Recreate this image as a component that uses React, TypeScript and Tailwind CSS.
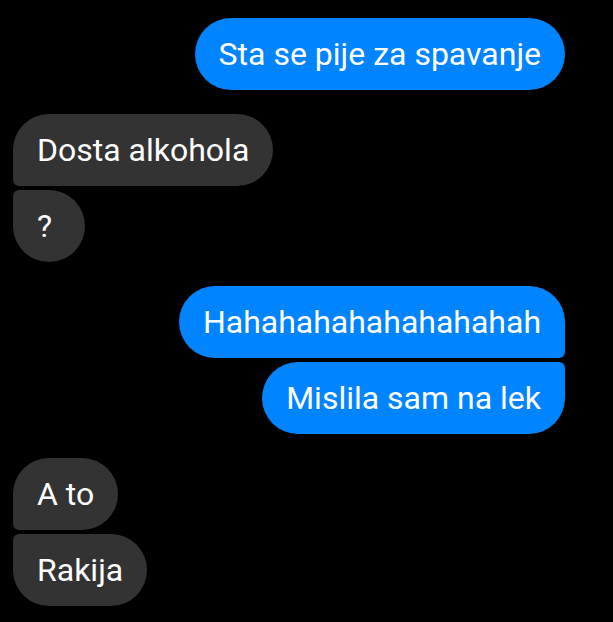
import React from 'react';

type Msg = { text: string; mine: boolean; shape: string };

const groups: Msg[][] = [
  [{ text: 'Sta se pije za spavanje', mine: true, shape: 'rounded-full' }],
  [
    { text: 'Dosta alkohola', mine: false, shape: 'rounded-[36px] rounded-bl-[6px]' },
    { text: '?', mine: false, shape: 'rounded-[36px] rounded-tl-[6px]' },
  ],
  [
    { text: 'Hahahahahahahahahah', mine: true, shape: 'rounded-[36px] rounded-br-[6px]' },
    { text: 'Mislila sam na lek', mine: true, shape: 'rounded-[36px] rounded-tr-[6px]' },
  ],
  [
    { text: 'A to', mine: false, shape: 'rounded-[36px] rounded-bl-[6px]' },
    { text: 'Rakija', mine: false, shape: 'rounded-[36px] rounded-tl-[6px]' },
  ],
];

export default function App() {
  return (
    <div className="min-h-[622px] w-[613px] bg-black pt-[18px] pl-[13px] pr-[48px] font-['Roboto',sans-serif] text-white">
      <div className="flex flex-col gap-6">
        {groups.map((group, gi) => (
          <div key={gi} className="flex flex-col gap-1">
            {group.map((m, i) => (
              <div
                key={i}
                className={`flex h-[72px] min-w-[72px] items-center px-6 text-[32px] leading-none ${m.shape} ${
                  m.mine ? 'self-end bg-[#0084ff]' : 'self-start bg-[#333333]'
                }`}
              >
                {m.text}
              </div>
            ))}
          </div>
        ))}
      </div>
    </div>
  );
}
